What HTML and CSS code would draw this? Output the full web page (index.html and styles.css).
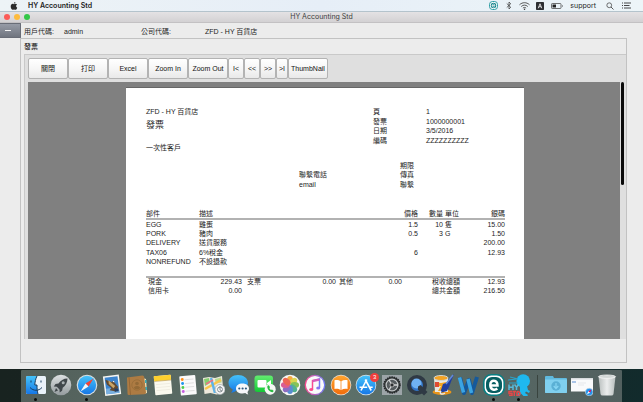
FILE: index.html
```
<!DOCTYPE html>
<html lang="zh-Hant">
<head>
<meta charset="utf-8">
<title>HY Accounting Std</title>
<link rel="stylesheet" href="styles.css">
</head>
<body>
<header class="menubar">
  <svg class="apple" viewBox="0 0 16 18" aria-hidden="true"><path d="M11 0c.2 2-1.500 3.900-3.300 3.900C7.500 2 9.200.2 11 0zM8 5c.8 0 1.900-.9 3.400-.9 1.500 0 2.700.7 3.400 1.800-3.100 1.800-2.500 5.800.5 7-.8 2.200-2.300 4.700-4 4.700-1.200 0-1.700-.8-3.200-.8s-2 .8-3.200.8C2.800 17.600.6 13.900.6 10.300.6 6.600 2.800 4.200 5.100 4.200 6.400 4.200 7.300 5 8 5z"/></svg>
  <strong class="app-name">HY Accounting Std</strong>
  <div class="status">
    <svg class="s-e" viewBox="0 0 18 18"><rect x="1" y="1" width="16" height="16" rx="6" fill="#fff" stroke="#17929a" stroke-width="1.800"/><circle cx="9" cy="9" r="5.500" fill="#0f7f88"/><path d="M6 9.200h6C12 5 6 5 6 9.200c0 3.500 4 3.800 5.800 2" fill="none" stroke="#fff" stroke-width="1.500"/></svg>
    <svg class="s-bt" viewBox="0 0 12 18"><path d="M1.500 5l8 7.500L6 16V2l3.500 3.500-8 7.500" fill="none" stroke="#333" stroke-width="1.400"/></svg>
    <svg class="s-wifi" viewBox="0 0 22 16"><g fill="none" stroke="#444" stroke-width="1.800"><path d="M1 5.500c6-5.500 14-5.500 20 0M4.500 9c4-3.700 9-3.700 13 0M7.800 12.200c2-1.800 4.400-1.800 6.400 0"/></g><circle cx="11" cy="14.300" r="1.500" fill="#333"/></svg>
    <svg class="s-a" viewBox="0 0 16 16"><rect width="16" height="16" rx="1.500" fill="#2d2f33"/><path d="M4.500 12.500L8 3.500l3.500 9M5.700 9.500h4.600" fill="none" stroke="#fff" stroke-width="1.600"/></svg>
    <svg class="s-bat" viewBox="0 0 24 12"><rect x="1" y="1" width="19" height="10" rx="1.500" fill="none" stroke="#444" stroke-width="1.500"/><path d="M3 3h7v6H3z" fill="#222"/><path d="M22 4c2 .5 2 3.500 0 4z" fill="#444"/></svg>
    <span class="user">support</span>
    <svg class="s-find" viewBox="0 0 16 16"><circle cx="6.500" cy="6.500" r="4.800" fill="none" stroke="#444" stroke-width="1.500"/><path d="M10 10l5 5" stroke="#444" stroke-width="1.800"/></svg>
    <svg class="s-list" viewBox="0 0 18 14"><path d="M0 2h2M4 2h14M0 7h2M4 7h11M0 12h2M4 12h14" stroke="#333" stroke-width="1.800"/></svg>
  </div>
</header>

<main class="window">
  <div class="titlebar">
    <div class="lights"><i class="light red"></i><i class="light amber"></i><i class="light green"></i></div>
    <h1>HY Accounting Std</h1>
  </div>
  <div class="content">
    <button class="collapse" type="button" aria-label="收合"><span class="dash"></span></button>
    <div class="workspace">
      <dl class="session">
        <dt>用戶代碼:</dt><dd>admin</dd>
        <dt>公司代碼:</dt><dd>ZFD - HY 百貨店</dd>
      </dl>
      <section class="panel">
        <h2>發票</h2>
        <div class="report">
          <div class="toolbar">
            <button type="button">關閉</button>
            <button type="button">打印</button>
            <button type="button">Excel</button>
            <button type="button">Zoom In</button>
            <button type="button">Zoom Out</button>
            <button type="button" class="nav">I&lt;</button>
            <button type="button" class="nav">&lt;&lt;</button>
            <button type="button" class="nav">&gt;&gt;</button>
            <button type="button" class="last">&gt;I</button>
            <button type="button">ThumbNail</button>
          </div>
          <div class="view-row">
            <div class="viewer">
              <article class="page">
                <div class="doc-head">
                  <div>
                    <p class="company">ZFD - HY 百貨店</p>
                    <h3>發票</h3>
                    <p class="customer">一次性客戶</p>
                  </div>
                  <dl class="meta">
                    <dt>頁</dt><dd>1</dd>
                    <dt>發票</dt><dd>1000000001</dd>
                    <dt>日期</dt><dd>3/5/2016</dd>
                    <dt>編碼</dt><dd>ZZZZZZZZZZ</dd>
                  </dl>
                </div>
                <div class="contact">
                  <span></span><span>期限</span>
                  <span>聯繫電話</span><span>傳真</span>
                  <span>email</span><span>聯繫</span>
                </div>
                <table class="items">
                  <colgroup><col class="c-part"><col><col class="c-price"><col class="c-qty"><col class="c-unit"><col class="c-amt"></colgroup>
                  <thead><tr><th>部件</th><th>描述</th><th class="num">價格</th><th class="num">數量</th><th class="unit">單位</th><th class="num">銀碼</th></tr></thead>
                  <tbody>
                    <tr><td>EGG</td><td>雞蛋</td><td class="num">1.5</td><td class="num">10</td><td class="unit">隻</td><td class="num">15.00</td></tr>
                    <tr><td>PORK</td><td>豬肉</td><td class="num">0.5</td><td class="num">3</td><td class="unit">G</td><td class="num">1.50</td></tr>
                    <tr><td>DELIVERY</td><td>送貨服務</td><td></td><td></td><td></td><td class="num">200.00</td></tr>
                    <tr><td>TAX06</td><td>6%稅金</td><td class="num">6</td><td></td><td></td><td class="num">12.93</td></tr>
                    <tr><td>NONREFUND</td><td>不設退款</td><td></td><td></td><td></td><td></td></tr>
                  </tbody>
                </table>
                <table class="totals">
                  <colgroup><col class="t-a"><col class="t-b"><col class="t-c"><col class="t-d"><col class="t-e"><col class="t-f"><col class="t-g"><col></colgroup>
                  <tbody>
                    <tr><th class="first">現金</th><td class="num">229.43</td><th class="pay">支票</th><td class="num">0.00</td><th class="other">其他</th><td class="num">0.00</td><th class="sum">稅收總額</th><td class="num">12.93</td></tr>
                    <tr><th class="first">信用卡</th><td class="num">0.00</td><th></th><td></td><th></th><td></td><th class="sum">總共金額</th><td class="num">216.50</td></tr>
                  </tbody>
                </table>
              </article>
            </div>
            <div class="scroll"><div class="thumb"></div></div>
          </div>
        </div>
      </section>
    </div>
  </div>
</main>

<footer class="desktop">
  <svg width="0" height="0" class="defs" aria-hidden="true"><defs>
    <linearGradient id="blue" x2="0" y2="1"><stop stop-color="#45c3fb"/><stop offset="1" stop-color="#1677e6"/></linearGradient>
    <linearGradient id="silver" x2="0" y2="1"><stop stop-color="#dde1e2"/><stop offset="1" stop-color="#949b9e"/></linearGradient>
    <linearGradient id="orange" x2="0" y2="1"><stop stop-color="#ffa52f"/><stop offset="1" stop-color="#f26c0c"/></linearGradient>
    <linearGradient id="green" x2="0" y2="1"><stop stop-color="#63ee70"/><stop offset="1" stop-color="#14c936"/></linearGradient>
    <linearGradient id="pink" x2="1"><stop stop-color="#fb4a8f"/><stop offset="1" stop-color="#6f7bf5"/></linearGradient>
    <linearGradient id="trash" x2="1"><stop stop-color="#c2c7c6"/><stop offset=".5" stop-color="#f7f8f8"/><stop offset="1" stop-color="#bfc5c4"/></linearGradient>
  </defs></svg>
  <nav class="dock" aria-label="Dock">
    <a href="#" class="running" aria-label="Finder"><svg viewBox="0 0 22 22"><rect x="1" y="2" width="20" height="18" rx="1.500" fill="#e9f2fa"/><path d="M2.500 2H12c-1.500 3-2 6-2.200 9H12c0 3.500.2 6 1 9H2.500Q1 20 1 18.500v-15Q1 2 2.500 2z" fill="url(#blue)"/><path d="M6 6.500v2M16 6.500v2M5 13.500c3.500 3.700 8.500 3.700 12 0M12 2c-1.500 3-2 6-2.200 9H12c0 3.500.2 6 1 9" fill="none" stroke="#173c60" stroke-width="1"/></svg></a>
    <a href="#" aria-label="Launchpad"><svg viewBox="0 0 22 22"><circle cx="11" cy="11" r="10.300" fill="url(#silver)"/><path d="M17.500 4.500c-4 0-7 2-9 5L5.500 10 3.800 12.500l3 .2 2.700 2.700.2 3 2.400-1.600.6-3c3-2.200 4.800-5.300 4.800-9.300z" fill="#40474b"/><circle cx="13.200" cy="8.800" r="1.500" fill="#a9b0b3"/><path d="M6 14l-1.500 4L8 16.500z" fill="#40474b"/></svg></a>
    <a href="#" class="running" aria-label="Safari"><svg viewBox="0 0 22 22"><circle cx="11" cy="11" r="10.300" fill="#d9dfe1"/><circle cx="11" cy="11" r="9.200" fill="url(#blue)"/><path d="M17.500 4.500l-5 8-3-3z" fill="#f34336"/><path d="M4.500 17.500l5-8 3 3z" fill="#f6f6f6"/></svg></a>
    <a href="#" aria-label="Mail"><svg viewBox="0 0 22 22"><g transform="rotate(-7 11 11)"><rect x="3" y="1.500" width="16" height="19.500" fill="#f6f6f2"/><rect x="4.500" y="3" width="13" height="16.500" fill="#3c84cd"/><path d="M4.500 14h13v5.500h-13z" fill="#78afe0"/><path d="M5 5l6 3 2-1 1 2 3 5-3 4-6-2 2-2-4-4z" fill="#624a32"/><path d="M8 5.500l6 7-2 2-4-5z" fill="#c9a467"/><path d="M13 7l1 1.500-2-.3z" fill="#fff"/><path d="M13 15h4v3h-4z" fill="#243f66"/></g></svg></a>
    <a href="#" aria-label="Contacts"><svg viewBox="0 0 22 22"><path d="M17 4l3 1 1 14-3 1z" fill="#f0e3b8"/><path d="M19 6h1.500v3H19zM19 13h2v3h-2z" fill="#37aab7"/><path d="M1 3.500L16.500 1.500q1.500 0 1.700 1.500L20 18.500q0 1.500-1.500 1.700L3 21q-1.500 0-1.500-1.500z" fill="#ad7b43"/><path d="M3 3.300L4.500 21" stroke="#8a5e30" stroke-width=".7"/><circle cx="11" cy="11" r="5.200" fill="none" stroke="#936a37" stroke-width=".7"/><circle cx="11" cy="9.500" r="1.800" fill="#936a37"/><path d="M7.800 13.800c1-2.500 5.400-2.500 6.400 0-1.500 2-4.900 2-6.400 0z" fill="#936a37"/></svg></a>
    <a href="#" aria-label="Notes"><svg viewBox="0 0 22 22"><g transform="rotate(-5 11 11)"><rect x="2.500" y="1.500" width="17" height="19" rx=".8" fill="#fbf9ef"/><path d="M2.500 1.500h17v5h-17z" fill="#fdd02e"/><path d="M2.500 6.700h17" stroke="#b7944b" stroke-width=".6"/><path d="M4 10h14M4 13h14M4 16h14" stroke="#e4e0d2" stroke-width=".5"/></g></svg></a>
    <a href="#" aria-label="Reminders"><svg viewBox="0 0 22 22"><g transform="rotate(-5 11 11)"><rect x="3" y="1.500" width="16" height="19.500" rx="1" fill="#fafafa"/><path d="M8 5.500h9M8 9.300h9M8 13h9M8 17h9" stroke="#cfcfcf" stroke-width=".6"/><circle cx="5.700" cy="5" r="1.500" fill="#ff8d1a"/><circle cx="5.700" cy="9" r="1.500" fill="#2196ec"/><circle cx="5.700" cy="13" r="1.500" fill="#50cc4c"/><circle cx="5.700" cy="17" r="1.500" fill="#c65de0"/></g></svg></a>
    <a href="#" aria-label="Maps"><svg viewBox="0 0 22 22"><path d="M0 4l6-1 6 1 7-2 1.500 17-7 1.500-6-1.500-6 1z" fill="#eee9dc"/><path d="M1 5l5-1 1 5-5 3z" fill="#84ce70"/><path d="M12 5l6-1.500.6 5-6 1z" fill="#b9dc92"/><path d="M2 15L18 6" stroke="#f9c64c" stroke-width="2.500"/><path d="M8 4l4 15" stroke="#5eb3ea" stroke-width="2.500"/><path d="M3 10l7-4" stroke="#ec7484" stroke-width="1.500"/><circle cx="17" cy="15.500" r="5" fill="#f5f5f5" stroke="#a4adb0" stroke-width=".8"/><circle cx="17" cy="15.500" r="2.500" fill="none" stroke="#717b80" stroke-width=".8"/><path d="M17 12v4l2 1" stroke="#717b80" fill="none" stroke-width=".8"/></svg></a>
    <a href="#" aria-label="Messages"><svg viewBox="0 0 22 22"><path d="M10 1C4.500 1 .5 4.300.5 8.800c0 3 1.700 5.300 4.300 6.600-.3 1.500-1 2.500-2 3.400 2.500-.2 4-1.100 5.300-2.400C15 17 20 13.500 20 8.800 20 4.300 15.500 1 10 1z" fill="url(#blue)"/><path d="M14.500 9.500c-4 0-6.500 2-6.500 5s2.600 5 6.500 5c1 0 2-.2 2.800-.5.8.7 1.700 1.300 3 1.400-.5-.7-.8-1.600-.8-2.500C23 14 20 9.500 14.500 9.500z" fill="#f6f8fa"/><circle cx="11.300" cy="14.500" r="1.100" fill="#2d587f"/><circle cx="14.600" cy="14.500" r="1.100" fill="#2d587f"/><circle cx="17.900" cy="14.500" r="1.100" fill="#2d587f"/></svg></a>
    <a href="#" aria-label="FaceTime"><svg viewBox="0 0 22 22"><rect x=".5" y="1.500" width="18.500" height="16.500" rx="3" fill="url(#green)"/><rect x="3.500" y="6" width="9" height="7.500" rx="1" fill="#fff"/><path d="M13 9l4-3v7l-4-3z" fill="#fff"/><circle cx="16.200" cy="15.200" r="5.500" fill="#f5f8f5"/><path d="M13.500 11.800c-1 2.500 2 6.500 5 6.500l1.300-1.300-1.800-1.600-1.100.7c-.8-.5-1.300-1.200-1.600-2l.8-.9-1.300-1.900z" fill="#29bb42"/></svg></a>
    <a href="#" aria-label="Photos"><svg viewBox="0 0 22 22"><circle cx="11" cy="11" r="10.300" fill="#f8f8f6"/><g opacity=".88"><ellipse cx="11" cy="6.300" rx="3" ry="4.400" fill="#f7a02a"/><ellipse cx="11" cy="6.300" rx="3" ry="4.400" fill="#d6d13a" transform="rotate(45 11 11)"/><ellipse cx="11" cy="6.300" rx="3" ry="4.400" fill="#77bb43" transform="rotate(90 11 11)"/><ellipse cx="11" cy="6.300" rx="3" ry="4.400" fill="#3ca982" transform="rotate(135 11 11)"/><ellipse cx="11" cy="6.300" rx="3" ry="4.400" fill="#4480cd" transform="rotate(180 11 11)"/><ellipse cx="11" cy="6.300" rx="3" ry="4.400" fill="#805abb" transform="rotate(225 11 11)"/><ellipse cx="11" cy="6.300" rx="3" ry="4.400" fill="#d74885" transform="rotate(270 11 11)"/><ellipse cx="11" cy="6.300" rx="3" ry="4.400" fill="#ec523e" transform="rotate(315 11 11)"/></g></svg></a>
    <a href="#" aria-label="iTunes"><svg viewBox="0 0 22 22"><circle cx="11" cy="11" r="9.700" fill="#fafafa" stroke="url(#pink)" stroke-width="1.300"/><path d="M8.500 15.500V6.500L15.500 5v9" fill="none" stroke="url(#pink)" stroke-width="1.500"/><path d="M8.500 5.900l7-1.500v2.300l-7 1.500z" fill="#d55cbc"/><ellipse cx="7.200" cy="15.500" rx="2" ry="1.600" fill="#fb4a8f"/><ellipse cx="14.200" cy="14" rx="2" ry="1.600" fill="#8973ef"/></svg></a>
    <a href="#" aria-label="iBooks"><svg viewBox="0 0 22 22"><circle cx="11" cy="11" r="10.300" fill="#e9dfd2"/><circle cx="11" cy="11" r="9.600" fill="url(#orange)"/><path d="M10.600 7.200C9 6 6.800 5.800 4.500 6.300v8.800c2.300-.5 4.500-.2 6.100 1zM11.400 7.200c1.600-1.200 3.800-1.400 6.100-.9v8.800c-2.300-.5-4.500-.2-6.100 1z" fill="#fff"/></svg></a>
    <a href="#" aria-label="App Store"><svg viewBox="0 0 22 22"><circle cx="11" cy="11" r="10.300" fill="#dce5e9"/><circle cx="11" cy="11" r="9.600" fill="url(#blue)"/><path d="M6 16.500l5.800-11M10.200 5.500l6 11M4.500 13.200h7.700M14.700 13.200h3" stroke="#fff" stroke-width="1.600"/></svg><span class="badge">3</span></a>
    <a href="#" aria-label="System Preferences"><svg viewBox="0 0 22 22"><rect x="1" y="1" width="20" height="20" fill="#9ca4a8"/><circle cx="11" cy="11" r="8" fill="#333839" stroke="#26292b" stroke-width="1.600" stroke-dasharray="1.500 .8"/><circle cx="11" cy="11" r="5.900" fill="#555b5e" stroke="#c2c6c8" stroke-width="1.200"/><path d="M11 11h6M11 11L8 6M11 11l-3 5" stroke="#d1d4d5" stroke-width="1.400"/><circle cx="11" cy="11" r="2" fill="#2b2e30" stroke="#ccc" stroke-width=".7"/></svg></a>
    <a href="#" aria-label="QuickTime Player"><svg viewBox="0 0 22 22"><circle cx="11" cy="11" r="8" fill="#3274c6" stroke="#2f3944" stroke-width="4"/><circle cx="10.500" cy="9.500" r="5" fill="#6fb2f3"/><path d="M12 12.500l2.500-1.500 7 7-3.500 3.500-6-6z" fill="#2f3944"/></svg></a>
    <a href="#" aria-label="Paint"><svg viewBox="0 0 22 22"><ellipse cx="10" cy="18" rx="9.500" ry="3" fill="#e89419"/><path d="M2 4h14v14H3z" fill="#e9e7df"/><ellipse cx="9" cy="4" rx="7" ry="2.500" fill="#f4a324" stroke="#d5d6cf" stroke-width="1"/><path d="M2 8l4 2-3 3 6-1-3 5h8V8L9 9z" fill="#f5a41f"/><path d="M3 8h4v5H3z" fill="#df4c32"/><path d="M22 0l-8 9-3 1-3 9 7-2 2-4z" fill="#213f9e"/><path d="M21 1l-7 9" stroke="#6289d9" stroke-width="1.500"/><path d="M9 17c-2 3 1 4 4 2" fill="none" stroke="#e8e8e8" stroke-width="1.500"/></svg></a>
    <a href="#" aria-label="Word"><svg viewBox="0 0 22 22"><path d="M3 3.500L7 19l5-13 3 13 5-16" fill="none" stroke="#15599b" stroke-width="4" stroke-linejoin="round"/><path d="M2.500 3.500L6.500 18.500M11 5l3.500 14" fill="none" stroke="#3ba5e4" stroke-width="3.500"/></svg></a>
    <a href="#" class="running" aria-label="e"><svg viewBox="0 0 22 22"><rect x=".8" y=".8" width="20.400" height="20.400" rx="7.500" fill="#fff" stroke="#087e83" stroke-width="1.600"/><rect x="3" y="3" width="16" height="16" rx="6" fill="#075e62"/><path d="M7 11.500h7.500C14.500 5.200 7.300 5 7.300 11c0 5.300 4.800 5.400 7 3.500" fill="none" stroke="#fff" stroke-width="2.500"/></svg></a>
    <a href="#" class="running" aria-label="HY STD"><svg viewBox="0 0 22 22"><circle cx="15.200" cy="7" r="6.800" fill="#1fb8ef"/><path d="M12 12h7l1 4 2 1-1 2-3-1.500-1 1.500 3 2-1 1.500h-3l-3-3-2 3H8l4-5z" fill="#1fb8ef"/><path d="M0 6l9-1M1 9h9M2 3l8 2" stroke="#2ba3c9" stroke-width="1.200"/><path d="M1 10.500v5.500M1 13.200h4M5 10.500v5.500M6.500 10.500l2 2.700 2-2.700M8.500 13v3" stroke="#56bbdc" stroke-width="1.500" fill="none"/><path d="M4 17.500H1v2h3V21.500H1M4.500 17.500h3.500M6.300 17.500V22M9 17.500V21.500c4 0 4-4 0-4" stroke="#e34848" stroke-width="1.500" fill="none"/></svg></a>
    <span class="divider"></span>
    <a href="#" aria-label="Downloads"><svg viewBox="0 0 22 22"><path d="M0 3q0-1 1-1h7l1 2h12q1 0 1 1v13q0 1-1 1H1q-1 0-1-1z" fill="#5fb9de"/><path d="M0 5.500h22V18q0 1-1 1H1q-1 0-1-1z" fill="#80d0ef"/><circle cx="11" cy="12" r="4.700" fill="#5ab0d5"/><path d="M11 9v5M8.700 12l2.300 2.500 2.300-2.500" fill="none" stroke="#86d5f3" stroke-width="1.200"/></svg></a>
    <a href="#" aria-label="Safari window"><svg viewBox="0 0 22 22"><rect y="4" width="22" height="13.500" fill="#f9fafb"/><path d="M0 4h22v1.500H0z" fill="#d9dcde"/><path d="M1 8h4" stroke="#5b8fd4"/><path d="M7 9h8M7 11h6" stroke="#d9dde1" stroke-width=".6"/><circle cx="18.200" cy="18" r="3.800" fill="#2594ed" stroke="#d9e0e4" stroke-width=".6"/><path d="M20.500 15.500l-1.500 3.300-1.600-1.600z" fill="#f04"/><path d="M16 20.300l1.400-3.100 1.600 1.600z" fill="#fff"/></svg></a>
    <a href="#" aria-label="Trash"><svg viewBox="0 0 22 22"><path d="M2.500 2.500h17L17.500 20q-.2 1.500-2 1.500h-9q-1.800 0-2-1.500z" fill="url(#trash)" opacity=".93"/><ellipse cx="11" cy="2.700" rx="8.500" ry="1.700" fill="#d2d7d6" stroke="#f6f7f7" stroke-width=".8"/></svg></a>
  </nav>
</footer>
</body>
</html>
```
FILE: styles.css
```
* { box-sizing: border-box; }

body {
  margin: 0;
  min-height: 100vh;
  display: flex;
  flex-direction: column;
  overflow: hidden;
  background: #14201f;
  color: #1c1c1c;
  font: 7px/10px "Liberation Sans", "Noto Sans CJK TC", sans-serif;
}

h1, h2, h3, p, dl, dd { margin: 0; font-size: inherit; }
svg { display: block; flex: none; }

/* Menu bar */
.menubar {
  display: flex;
  align-items: center;
  height: 12px;
  padding: 0 12px 0 10px;
  border-bottom: 1px solid #b4c3cc;
  background: linear-gradient(90deg, #edf3f6, #e6eef7 50%, #edf5f8);
  font-family: Inter, sans-serif;
}
.apple { width: 8px; height: 8px; fill: #2b2b2b; }
.app-name { margin-left: 10px; font-weight: 600; }
.status { display: flex; align-items: center; margin-left: auto; }
.s-e { width: 9px; height: 9px; }
.s-bt { width: 6px; height: 9px; margin-left: 8px; }
.s-wifi { width: 11px; height: 8px; margin-left: 7px; }
.s-a { width: 8px; height: 8px; margin-left: 6px; }
.s-bat { width: 12px; height: 6px; margin-left: 7px; }
.user { margin-left: 7px; }
.s-find { width: 8px; height: 8px; margin-left: 10px; }
.s-list { width: 9px; height: 7px; margin-left: 8px; }

/* Window */
.window {
  flex: 1;
  display: flex;
  flex-direction: column;
  background: #ececec;
}
.titlebar {
  display: grid;
  grid-template-columns: 1fr auto 1fr;
  align-items: center;
  height: 11px;
  padding: 0 4px;
  border-bottom: 1px solid #c3c1c3;
  background: linear-gradient(#e4e2e4, #d3d1d3);
  color: #3c3c3c;
}
.titlebar h1 { font: 7px/10px Inter, sans-serif; }
.lights { display: flex; gap: 4px; }
.light { width: 6px; height: 6px; border-radius: 50%; }
.red { background: #fc5b57; }
.amber { background: #fdbb3d; }
.green { background: #33c748; }

.content { flex: 1; display: flex; align-items: stretch; }
.collapse {
  display: flex;
  align-items: center;
  justify-content: center;
  width: 21px;
  height: 15px;
  padding: 0 4px 0 0;
  border: 1px solid #696d77;
  border-left: 0;
  border-radius: 0 1px 1px 0;
  background: linear-gradient(#969ba6, #70757f);
}
.dash { width: 6px; height: 1px; background: #f4f4f4; }
.workspace {
  flex: 1;
  display: flex;
  flex-direction: column;
  margin: 0 16px 6px -1px;
}
.session {
  display: grid;
  grid-template-columns: 40px 77px 64px 1fr;
  align-items: center;
  height: 15px;
  padding: 3px 0 0 4px;
}

/* Report panel */
.panel {
  flex: 1;
  display: flex;
  flex-direction: column;
  padding-bottom: 23px;
  border: 1px solid #c2c2c2;
}
.panel h2 { padding: 3px 3px 2px; font-weight: 500; }
.report {
  flex: 1;
  display: flex;
  flex-direction: column;
  margin-left: 3px;
  padding: 3px 2px 0 3px;
  border: solid #c9c9c9;
  border-width: 1px 0 0 1px;
  background: #dfdfdf;
}
.toolbar { display: flex; padding-bottom: 3px; }
.toolbar button {
  width: 40px;
  height: 21px;
  padding: 0;
  border: 1px solid #b3b3b3;
  border-radius: 2px;
  background: linear-gradient(#fff, #f6f6f6 50%, #e9e9e9);
  color: #111;
  font: inherit;
  text-align: center;
  white-space: nowrap;
}
.toolbar .nav { width: 16px; }
.toolbar .last { width: 12px; }

.view-row { flex: 1; display: flex; gap: 1px; }
.viewer {
  flex: 1;
  display: flex;
  padding: 5px 96px 0 98px;
  background: #808080;
}
.scroll { width: 3px; }
.thumb { height: 40%; border-radius: 2px; background: #0a0a0a; }

/* Invoice page */
.page {
  flex: 1;
  padding: 19px 19px 0 20px;
  border: solid #666;
  border-width: 1px 0 0;
  background: #fff;
}
.doc-head {
  display: grid;
  grid-template-columns: 1fr 132px;
  align-items: start;
}
.customer { margin-top: 10px; }
.doc-head h3 { font-size: 9px; font-weight: 400; line-height: 16px; }
.meta {
  display: grid;
  grid-template-columns: 53px 1fr;
  grid-auto-rows: 1fr;
  height: 38px;
  line-height: 9px;
}
.contact {
  display: grid;
  grid-template-columns: 101px 1fr;
  grid-auto-rows: 1fr;
  height: 28px;
  margin: 8px 0 21px 153px;
  line-height: 9px;
}

table { width: 100%; table-layout: fixed; border-collapse: collapse; line-height: 8px; }
th, td { padding: 0; text-align: left; font-weight: 400; white-space: nowrap; }
.num { text-align: right; }
.unit { padding-left: 2px; }
.c-part { width: 53px; }
.c-price { width: 42px; }
.c-qty { width: 25px; }
.c-unit { width: 24px; }
.c-amt { width: 38px; }
.items thead { border-bottom: 2px solid #b2b2b2; }
.items tbody tr:nth-child(odd) { height: 10px; }
.items tbody tr:nth-child(even) { height: 9px; }

.totals { margin-top: 9px; border-top: 2px solid #b2b2b2; }
.totals tr { height: 9px; }
.t-a { width: 48px; }
.t-b { width: 48px; }
.t-c { width: 48px; }
.t-d { width: 46px; }
.t-e { width: 32px; }
.t-f { width: 34px; }
.t-g { width: 60px; }
.first { padding-left: 2px; }
.pay { padding-left: 5px; }
.other { padding-left: 3px; }
.sum { padding-left: 30px; }

/* Dock */
.desktop {
  flex: none;
  height: 33px;
  padding: 1px 21px 0;
  background: linear-gradient(90deg, #182320, #1a2423 50%, #122b2c);
}
.defs { position: absolute; }
.dock {
  display: grid;
  grid-template-columns: repeat(20, 1fr) 12px repeat(3, 1fr);
  height: 32px;
  padding: 4px 2px 0;
  border-radius: 1px 1px 0 0;
  background: linear-gradient(90deg, #53605b, #5d716a 50%, #52605f);
}
.dock a {
  position: relative;
  display: flex;
  justify-content: center;
}
.dock svg { width: 22px; height: 22px; }
.running::after {
  content: "";
  position: absolute;
  bottom: 1px;
  width: 3px;
  height: 3px;
  border-radius: 50%;
  background: #090c0b;
}
.badge {
  position: absolute;
  top: -1px;
  right: 0;
  width: 9px;
  height: 9px;
  border-radius: 50%;
  background: #f33e3c;
  color: #fff;
  font-size: 6px;
  line-height: 9px;
  text-align: center;
}
.divider { width: 1px; height: 23px; margin: 1px auto 0; background: #39443f; }
```
